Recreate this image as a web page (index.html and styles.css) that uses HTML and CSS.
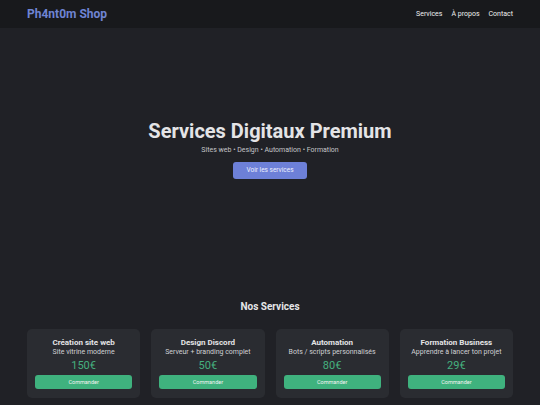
FILE: index.html
```html
<!DOCTYPE html>
<html>
<head>
    <title>Ph4nt0m Shop</title>
    <link rel="stylesheet" href="styles.css">
</head>
<body>
    <header class="topbar">
        <div class="wrap topbar-inner">
            <a class="logo" href="#">Ph4nt0m Shop</a>
            <nav class="nav">
                <a href="#services">Services</a>
                <a href="#about">À propos</a>
                <a href="#contact">Contact</a>
            </nav>
        </div>
    </header>

    <section class="hero">
        <h1>Services Digitaux Premium</h1>
        <p>Sites web • Design • Automation • Formation</p>
        <a class="btn-main" href="#services">Voir les services</a>
    </section>

    <section class="services" id="services">
        <h2>Nos Services</h2>
        <div class="wrap cards">
            <div class="card">
                <h3>Création site web</h3>
                <p>Site vitrine moderne</p>
                <div class="price">150€</div>
                <a class="btn-order" href="#">Commander</a>
            </div>
            <div class="card">
                <h3>Design Discord</h3>
                <p>Serveur + branding complet</p>
                <div class="price">50€</div>
                <a class="btn-order" href="#">Commander</a>
            </div>
            <div class="card">
                <h3>Automation</h3>
                <p>Bots / scripts personnalisés</p>
                <div class="price">80€</div>
                <a class="btn-order" href="#">Commander</a>
            </div>
            <div class="card">
                <h3>Formation Business</h3>
                <p>Apprendre à lancer ton projet</p>
                <div class="price">29€</div>
                <a class="btn-order" href="#">Commander</a>
            </div>
        </div>
    </section>
</body>
</html>
```

FILE: styles.css
```css
* {
    box-sizing: border-box;
}

body {
    margin: 0;
    background-color: #202126;
    color: #e2e2e4;
    font-family: Roboto, "Liberation Sans", sans-serif;
}

a {
    text-decoration: none;
}

.wrap {
    width: 486px;
    margin: 0 auto;
}

.topbar {
    background-color: #18191c;
    height: 28px;
}

.topbar-inner {
    display: flex;
    justify-content: space-between;
    align-items: center;
    height: 100%;
}

.logo {
    color: #6f84d3;
    font-weight: bold;
    font-size: 12px;
}

.nav {
    display: flex;
    gap: 9px;
}

.nav a {
    color: #f0f0f0;
    font-size: 7px;
}

.hero {
    height: 242px;
    display: flex;
    flex-direction: column;
    align-items: center;
    justify-content: center;
    text-align: center;
}

.hero h1 {
    margin: 0;
    font-size: 20px;
    font-weight: bold;
    color: #e4e4e6;
}

.hero p {
    margin: 3px 0 8px;
    font-size: 7px;
    color: #c4c5c8;
}

.btn-main {
    display: block;
    width: 74px;
    height: 17px;
    line-height: 17px;
    border-radius: 3px;
    background-color: #6d80d8;
    color: #eef0ff;
    font-size: 6.5px;
}

.services h2 {
    margin: 31px 0 17px;
    text-align: center;
    font-size: 10px;
    font-weight: bold;
    color: #e6e6e8;
}

.cards {
    display: grid;
    grid-template-columns: repeat(4, 1fr);
    gap: 11px;
}

.card {
    background-color: #2a2c31;
    border-radius: 5px;
    padding: 9px 8px 9px;
    text-align: center;
}

.card h3 {
    margin: 0;
    font-size: 8px;
    font-weight: bold;
    color: #e4e4e6;
}

.card p {
    margin: 1px 0 0;
    font-size: 7px;
    color: #d0d0d3;
}

.price {
    margin: 3px 0 3px;
    font-size: 11px;
    color: #45b07f;
}

.btn-order {
    display: block;
    height: 14px;
    line-height: 14px;
    border-radius: 3px;
    background-color: #3fb27e;
    color: #f2f2f2;
    font-size: 5.5px;
}
```
